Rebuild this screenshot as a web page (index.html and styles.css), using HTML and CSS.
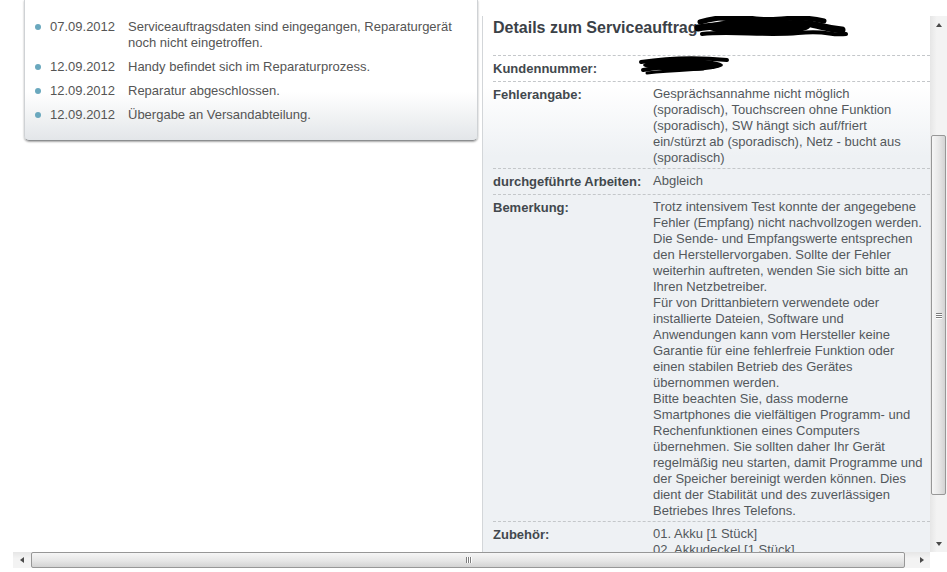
FILE: index.html
```html
<!DOCTYPE html>
<html lang="de">
<head>
<meta charset="utf-8">
<title>Serviceauftrag</title>
<link rel="stylesheet" href="styles.css">
</head>
<body>
<div class="window">
  <div class="content">
    <div class="history">
      <ul class="timeline">
        <li><span class="date">07.09.2012</span><span class="msg">Serviceauftragsdaten sind eingegangen, Reparaturgerät<br>noch nicht eingetroffen.</span></li>
        <li><span class="date">12.09.2012</span><span class="msg">Handy befindet sich im Reparaturprozess.</span></li>
        <li><span class="date">12.09.2012</span><span class="msg">Reparatur abgeschlossen.</span></li>
        <li><span class="date">12.09.2012</span><span class="msg">Übergabe an Versandabteilung.</span></li>
      </ul>
    </div>
    <section class="details">
      <h2 class="details-title">Details zum Serviceauftrag<svg class="redact redact-title" width="152" height="28" viewBox="0 0 152 28"><g fill="none" stroke="#000" stroke-linecap="round"><path d="M4 10 C20 5 40 4 60 7 S100 2 128 9" stroke-width="5"/><path d="M2 16 C30 11 60 15 90 12 S122 16 146 18" stroke-width="7"/><path d="M6 22 C36 19 70 24 102 21 S132 24 150 22" stroke-width="4"/><path d="M20 6 C50 12 80 6 110 14" stroke-width="3"/></g><ellipse cx="62" cy="15" rx="52" ry="8" fill="#000"/></svg></h2>
      <div class="row">
        <div class="label">Kundennummer:</div>
        <div class="value"><svg class="redact redact-num" width="94" height="20" viewBox="0 0 94 20"><g fill="none" stroke="#000" stroke-linecap="round"><path d="M4 6 C30 2 60 1 90 4" stroke-width="4"/><path d="M6 14 C30 10 60 9 80 10" stroke-width="4"/><path d="M10 17 C30 15 50 14 66 13" stroke-width="3"/></g><ellipse cx="46" cy="9" rx="40" ry="6" fill="#000"/></svg></div>
      </div>
      <div class="row">
        <div class="label">Fehlerangabe:</div>
        <div class="value">Gesprächsannahme nicht möglich<br>(sporadisch), Touchscreen ohne Funktion<br>(sporadisch), SW hängt sich auf/friert<br>ein/stürzt ab (sporadisch), Netz - bucht aus<br>(sporadisch)</div>
      </div>
      <div class="row">
        <div class="label">durchgeführte Arbeiten:</div>
        <div class="value">Abgleich</div>
      </div>
      <div class="row">
        <div class="label">Bemerkung:</div>
        <div class="value">Trotz intensivem Test konnte der angegebene<br>Fehler (Empfang) nicht nachvollzogen werden.<br>Die Sende- und Empfangswerte entsprechen<br>den Herstellervorgaben. Sollte der Fehler<br>weiterhin auftreten, wenden Sie sich bitte an<br>Ihren Netzbetreiber.<br>Für von Drittanbietern verwendete oder<br>installierte Dateien, Software und<br>Anwendungen kann vom Hersteller keine<br>Garantie für eine fehlerfreie Funktion oder<br>einen stabilen Betrieb des Gerätes<br>übernommen werden.<br>Bitte beachten Sie, dass moderne<br>Smartphones die vielfältigen Programm- und<br>Rechenfunktionen eines Computers<br>übernehmen. Sie sollten daher Ihr Gerät<br>regelmäßig neu starten, damit Programme und<br>der Speicher bereinigt werden können. Dies<br>dient der Stabilität und des zuverlässigen<br>Betriebes Ihres Telefons.</div>
      </div>
      <div class="row">
        <div class="label">Zubehör:</div>
        <div class="value">01. Akku [1 Stück]<br>02. Akkudeckel [1 Stück]</div>
      </div>
    </section>
  </div>

  <div class="vscroll">
    <div class="sb-btn"><span class="arrow arrow-up"></span></div>
    <div class="v-track">
      <div class="v-thumb"><span class="grip-h"></span><span class="grip-h"></span><span class="grip-h"></span></div>
    </div>
    <div class="sb-btn"><span class="arrow arrow-down"></span></div>
  </div>

  <div class="hscroll">
    <div class="sb-btn"><span class="arrow arrow-left"></span></div>
    <div class="h-track">
      <div class="h-thumb"><span class="grip-v"></span><span class="grip-v"></span><span class="grip-v"></span></div>
    </div>
    <div class="sb-btn"><span class="arrow arrow-right"></span></div>
  </div>
</div>
</body>
</html>
```

FILE: styles.css
```css
html, body {
  margin: 0;
  padding: 0;
  background: #fff;
}

body {
  font-family: "Liberation Sans", Arial, sans-serif;
  font-size: 13px;
  color: #555;
}

.window {
  width: 947px;
  height: 572px;
  display: grid;
  grid-template-columns: 13px 917px 17px;
  grid-template-rows: 552px 16px 4px;
  overflow: hidden;
}

.content {
  grid-column: 1 / 3;
  grid-row: 1;
  display: flex;
  align-items: flex-start;
  overflow: hidden;
}

/* ---------- left: status history ---------- */
.history {
  margin-left: 24px;
  width: 454px;
  flex: none;
  box-sizing: border-box;
  border: 1px solid #cfd2d5;
  border-top: 0;
  border-bottom-color: #8c8e90;
  border-radius: 0 0 5px 5px;
  box-shadow: 0 1px 2px rgba(0, 0, 0, 0.35);
  background: linear-gradient(#fff 0, #fff 92px, #e3e6e9 100%);
}

.timeline {
  list-style: none;
  margin: 0;
  padding: 19px 0 17px 10px;
}

.timeline li {
  display: flex;
  line-height: 16px;
  color: #555;
}

.timeline li + li {
  margin-top: 8px;
}

.timeline li::before {
  content: "";
  flex: none;
  width: 6px;
  height: 6px;
  margin: 5px 9px 0 0;
  border-radius: 50%;
  background: #6aa8be;
}

.date {
  width: 78px;
  flex: none;
}

.msg {
  white-space: nowrap;
}

/* ---------- right: details ---------- */
.details {
  flex: 1;
  align-self: stretch;
  margin: 16px 0 0 4px;
  padding-left: 10px;
  border-left: 1px solid #d3d6d9;
  background: linear-gradient(#fff 0, #fff 70px, #eef1f4 140px, #eef1f4 100%);
  overflow: hidden;
}

.details-title {
  margin: 0 0 17px;
  padding-top: 2px;
  font-size: 16px;
  line-height: 20px;
  font-weight: bold;
  color: #3b4147;
  white-space: nowrap;
}

.redact {
  overflow: visible;
}

.redact-title {
  vertical-align: top;
  margin: -6px 0 -8px -2px;
}

.redact-num {
  display: block;
  margin: -4px 0 -2px -16px;
}

.row {
  display: flex;
  border-top: 1px dashed #c4c7ca;
  padding: 3px 0 2px;
}

.label {
  width: 160px;
  flex: none;
  font-weight: bold;
  line-height: 20px;
  color: #42484d;
  white-space: nowrap;
}

.value {
  padding-top: 1px;
  line-height: 16px;
  color: #53585c;
  white-space: nowrap;
}

/* ---------- scrollbars ---------- */
.vscroll {
  grid-column: 3;
  grid-row: 1;
  margin-top: 16px;
  display: flex;
  flex-direction: column;
  background: linear-gradient(to right, #e6e6e6, #f3f3f3 40%, #f3f3f3);
}

.hscroll {
  grid-column: 2;
  grid-row: 2;
  display: flex;
  background: linear-gradient(#e6e6e6, #f3f3f3 40%, #f3f3f3);
}

.sb-btn {
  flex: none;
  width: 17px;
  height: 17px;
  display: flex;
  align-items: center;
  justify-content: center;
}

.hscroll .sb-btn {
  height: 16px;
}

.arrow {
  width: 0;
  height: 0;
  border-style: solid;
  border-color: transparent;
}

.arrow-up {
  border-width: 0 3px 4px;
  border-bottom-color: #4a4a4a;
}

.arrow-down {
  border-width: 4px 3px 0;
  border-top-color: #4a4a4a;
}

.arrow-left {
  border-width: 3px 4px 3px 0;
  border-right-color: #4a4a4a;
}

.arrow-right {
  border-width: 3px 0 3px 4px;
  border-left-color: #4a4a4a;
}

.v-track {
  flex: 1;
  padding-top: 102px;
}

.v-thumb {
  height: 358px;
  margin: 0 1px;
  border: 1px solid #979797;
  border-radius: 2px;
  background: linear-gradient(to right, #f6f6f6, #e6e6e6 55%, #d3d3d3);
  display: flex;
  flex-direction: column;
  align-items: center;
  justify-content: center;
  gap: 1px;
}

.grip-h {
  width: 6px;
  height: 1px;
  background: #7c7c7c;
  box-shadow: 0 1px 0 #fff;
}

.h-track {
  flex: 1;
  padding-left: 1px;
  display: flex;
}

.h-thumb {
  width: 872px;
  height: 14px;
  border: 1px solid #979797;
  border-radius: 2px;
  background: linear-gradient(#f6f6f6, #e6e6e6 55%, #d3d3d3);
  display: flex;
  align-items: center;
  justify-content: center;
  gap: 1px;
}

.grip-v {
  width: 1px;
  height: 6px;
  background: #7c7c7c;
  box-shadow: 1px 0 0 #fff;
}
```
